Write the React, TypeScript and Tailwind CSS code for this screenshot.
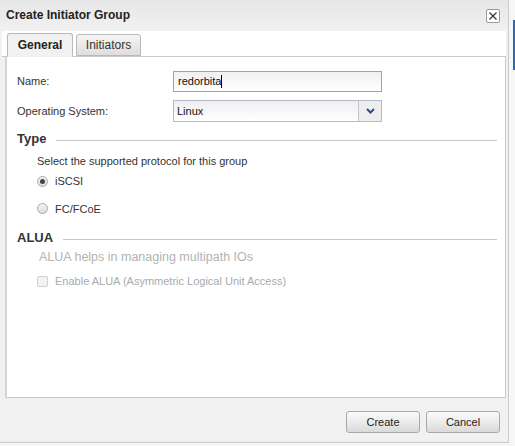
import React, { useState } from 'react';

const font = { fontFamily: '"Liberation Sans", Arial, sans-serif' };

const SectionHeader: React.FC<{ title: string }> = ({ title }) => (
  <div className="flex items-center gap-[10px] pl-[10px] pr-[8px]">
    <span className="text-[13px] font-bold text-[#333]">{title}</span>
    <div className="flex-1 h-px bg-[#c8c8c8] mt-[3px]" />
  </div>
);

const Radio: React.FC<{ checked: boolean; label: string; onClick: () => void }> = ({ checked, label, onClick }) => (
  <div className="flex items-center gap-[7px] pl-[30px] cursor-pointer" onClick={onClick}>
    <span className="w-[11px] h-[11px] rounded-full border border-[#a8a8a8] bg-gradient-to-b from-[#f4f4f4] to-[#dcdcdc] flex items-center justify-center">
      {checked && <span className="w-[5px] h-[5px] rounded-full bg-[#444]" />}
    </span>
    <span className="text-[11px] text-[#333]">{label}</span>
  </div>
);

export default function App() {
  const [protocol, setProtocol] = useState<'iscsi' | 'fc'>('iscsi');
  const [tab, setTab] = useState<'general' | 'initiators'>('general');

  return (
    <div className="w-[515px] h-[446px] bg-[#f6f6f6] relative overflow-hidden" style={font}>
      {/* window behind the dialog */}
      <div className="absolute right-0 top-[20px] w-[2px] h-[50px] bg-[#2a6db5]" />

      <div className="w-[509px] h-[443px] bg-[#f1f1f1] border-r border-b border-[#c9c9c9] flex flex-col">
        {/* Title bar */}
        <div className="h-[31px] flex items-center justify-between pl-[6px] pr-[8px] bg-gradient-to-b from-[#e6e6e6] to-[#f1f1f1]">
          <span className="text-[12px] font-bold text-[#222] -mt-[2px]">Create Initiator Group</span>
          <button className="w-[14px] h-[14px] border border-[#9a9a9a] rounded-[2px] bg-white flex items-center justify-center">
            <svg width="10" height="10" viewBox="0 0 10 10">
              <path d="M1.5 1.5 L8.5 8.5 M8.5 1.5 L1.5 8.5" stroke="#333" strokeWidth="1.2" />
            </svg>
          </button>
        </div>

        {/* Tabs */}
        <div className="mx-[2px] w-[504px] bg-white pt-[2px]">
          <div className="flex items-end gap-[3px] pl-[5px] border-b border-[#c9c9c9] h-[24px]">
            <button
              onClick={() => setTab('general')}
              className={`h-[23px] w-[66px] text-[12px] border border-[#b9b9b9] rounded-t-[3px] ${tab === 'general' ? 'bg-[#f1f1f1] text-[#222] font-bold h-[24px] -mb-px border-b-[#f1f1f1]' : 'bg-gradient-to-b from-[#f5f5f5] to-[#dedede] text-[#333]'}`}
            >
              General
            </button>
            <button
              onClick={() => setTab('initiators')}
              className={`h-[22px] w-[65px] text-[12px] border border-[#b9b9b9] rounded-t-[3px] ${tab === 'initiators' ? 'bg-[#f1f1f1] text-[#222] font-bold' : 'bg-gradient-to-b from-[#f5f5f5] to-[#dedede] text-[#333]'}`}
            >
              Initiators
            </button>
          </div>
        </div>

        {/* Panel */}
        <div className="ml-[5px] w-[501px] h-[341px] bg-white border border-t-0 border-[#c9c9c9] border-l-[#d4d4d4] border-l-[2px] flex flex-col pt-[14px]">
          <div className="flex items-center h-[21px] pl-[10px]">
            <span className="w-[156px] text-[11px] text-[#333]">Name:</span>
            <div className="w-[209px] h-[21px] border border-[#7eaad8] bg-gradient-to-b from-[#f0f0f0] to-white flex items-center pl-[4px] text-[11px] text-[#111]">
              redorbita<span className="w-px h-[13px] bg-black" />
            </div>
          </div>
          <div className="flex items-center h-[22px] pl-[10px] mt-[8px]">
            <span className="w-[156px] text-[11px] text-[#333]">Operating System:</span>
            <div className="w-[209px] h-[22px] border border-[#b5b9c8] bg-white flex">
              <div className="flex-1 flex items-center pl-[3px] text-[11px] text-[#111] bg-gradient-to-b from-[#efefef] to-white">Linux</div>
              <div className="w-[23px] border-l border-[#c4c4c4] bg-[#eeeeee] flex items-center justify-center">
                <svg width="9" height="6" viewBox="0 0 9 6">
                  <path d="M1 1 L4.5 4.5 L8 1" fill="none" stroke="#2d4d86" strokeWidth="2" />
                </svg>
              </div>
            </div>
          </div>

          <div className="mt-[7px]">
            <SectionHeader title="Type" />
          </div>
          <div className="pl-[30px] mt-[4px] text-[11px] text-[#333]">Select the supported protocol for this group</div>
          <div className="mt-[4px]">
            <Radio checked={protocol === 'iscsi'} label="iSCSI" onClick={() => setProtocol('iscsi')} />
          </div>
          <div className="mt-[11px]">
            <Radio checked={protocol === 'fc'} label="FC/FCoE" onClick={() => setProtocol('fc')} />
          </div>

          <div className="mt-[11px]">
            <SectionHeader title="ALUA" />
          </div>
          <div className="pl-[32px] mt-0 text-[12.5px] text-[#b3b3b3]">ALUA helps in managing multipath IOs</div>
          <div className="flex items-center gap-[7px] pl-[30px] mt-[7px]">
            <span className="w-[11px] h-[11px] rounded-[2px] border border-[#d0d0d0] bg-[#f3f3f3]" />
            <span className="text-[11px] text-[#aaaaaa]">Enable ALUA (Asymmetric Logical Unit Access)</span>
          </div>
        </div>

        {/* Footer */}
        <div className="flex justify-end gap-[6px] pr-[8px] mt-[13px]">
          <button className="w-[74px] h-[22px] text-[11px] text-[#222] border border-[#a9a9a9] rounded-[3px] bg-gradient-to-b from-[#fafafa] via-[#ececec] to-[#d9d9d9]">Create</button>
          <button className="w-[74px] h-[22px] text-[11px] text-[#222] border border-[#a9a9a9] rounded-[3px] bg-gradient-to-b from-[#fafafa] via-[#ececec] to-[#d9d9d9]">Cancel</button>
        </div>
      </div>
    </div>
  );
}
